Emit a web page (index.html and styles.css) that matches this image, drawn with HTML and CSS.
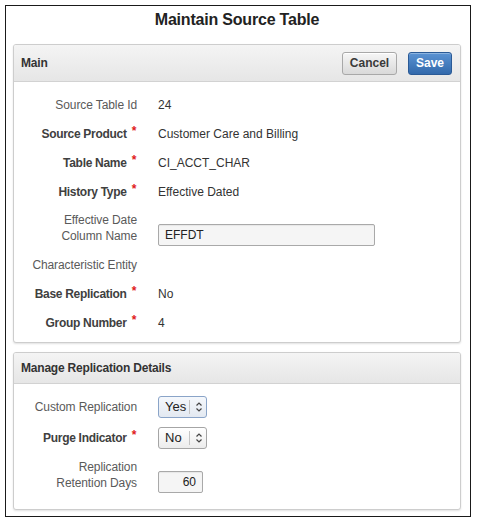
FILE: index.html
```html
<!DOCTYPE html>
<html>
<head>
<meta charset="utf-8">
<link rel="stylesheet" href="styles.css">
</head>
<body>
<div class="frame">
  <h1 class="title">Maintain Source Table</h1>

  <section class="panel">
    <header class="panel-head tall">
      <span class="panel-title">Main</span>
      <div class="actions">
        <button class="btn btn-cancel">Cancel</button>
        <button class="btn btn-save">Save</button>
      </div>
    </header>
    <div class="panel-body main-body">
      <div class="row"><span class="label">Source Table Id</span><span class="value">24</span></div>
      <div class="row"><span class="label req">Source Product <i>*</i></span><span class="value">Customer Care and Billing</span></div>
      <div class="row"><span class="label req">Table Name <i>*</i></span><span class="value">CI_ACCT_CHAR</span></div>
      <div class="row"><span class="label req">History Type <i>*</i></span><span class="value">Effective Dated</span></div>
      <div class="row row-multi">
        <span class="label two">Effective Date<br>Column Name</span>
        <span class="field field-wide">EFFDT</span>
      </div>
      <div class="row"><span class="label">Characteristic Entity</span><span class="value"></span></div>
      <div class="row"><span class="label req">Base Replication <i>*</i></span><span class="value">No</span></div>
      <div class="row"><span class="label req">Group Number <i>*</i></span><span class="value">4</span></div>
    </div>
  </section>

  <section class="panel panel-2">
    <header class="panel-head short">
      <span class="panel-title">Manage Replication Details</span>
    </header>
    <div class="panel-body repl-body">
      <div class="row row-sel">
        <span class="label">Custom Replication</span>
        <span class="select focused"><span class="sel-text">Yes</span><span class="sel-sep"></span><svg class="sel-arrow" viewBox="0 0 8 12" width="8" height="12"><path d="M1.5 4.5 L4 2 L6.5 4.5 M1.5 7.5 L4 10 L6.5 7.5" fill="none" stroke="#444" stroke-width="1.2"/></svg></span>
      </div>
      <div class="row row-sel">
        <span class="label req">Purge Indicator <i>*</i></span>
        <span class="select"><span class="sel-text">No</span><span class="sel-sep"></span><svg class="sel-arrow" viewBox="0 0 8 12" width="8" height="12"><path d="M1.5 4.5 L4 2 L6.5 4.5 M1.5 7.5 L4 10 L6.5 7.5" fill="none" stroke="#444" stroke-width="1.2"/></svg></span>
      </div>
      <div class="row row-multi row-ret">
        <span class="label two">Replication<br>Retention Days</span>
        <span class="field field-num">60</span>
      </div>
    </div>
  </section>
</div>
</body>
</html>
```

FILE: styles.css
```css
* { box-sizing: border-box; }
html, body { margin: 0; padding: 0; background: #fff; }
body {
  font-family: "Liberation Sans", Arial, sans-serif;
  font-size: 12px;
  color: #333;
}
.frame {
  margin: 5px 0 0 5px;
  width: 466px;
  height: 512px;
  border: 1px solid #1a1a1a;
  padding: 0 9px 0 7px;
}
.title {
  margin: 0;
  padding-top: 4px;
  height: 38px;
  line-height: 20px;
  font-size: 16px;
  letter-spacing: -0.2px;
  font-weight: bold;
  text-align: center;
  color: #222;
}
.panel {
  border: 1px solid #cdcdcd;
  border-radius: 3px;
  box-shadow: 0 1px 2px rgba(0,0,0,0.12);
  background: #fff;
}
.panel-2 { margin-top: 9px; }
.panel-head {
  display: flex;
  align-items: center;
  justify-content: space-between;
  padding: 0 8px 0 7px;
  background: linear-gradient(#f4f4f4, #e6e6e6);
  border-bottom: 1px solid #d2d2d2;
  border-radius: 2px 2px 0 0;
}
.panel-head.tall { height: 37px; }
.panel-head.short { height: 31px; }
.panel-title {
  font-weight: bold;
  color: #333;
  font-size: 12px;
  letter-spacing: -0.2px;
}
.actions { display: flex; gap: 11px; align-items: center; }
.btn {
  font-family: inherit;
  font-size: 12px;
  font-weight: bold;
  height: 23px;
  border-radius: 3px;
  padding: 0;
  cursor: pointer;
}
.btn-cancel {
  width: 55px;
  color: #3a3a3a;
  border: 1px solid #a8a8a8;
  background: linear-gradient(#f6f6f6, #d9d9d9);
  box-shadow: inset 0 1px 0 #fff;
}
.btn-save {
  width: 44px;
  color: #fff;
  border: 1px solid #2a5a96;
  background: linear-gradient(#5b93d3, #3269ab);
  box-shadow: inset 0 1px 0 rgba(255,255,255,0.3);
}
.panel-body { padding: 0; }
.main-body { padding: 8px 0 5px; }
.repl-body { padding: 7px 0 12px; }
.row {
  display: grid;
  grid-template-columns: 123px auto;
  column-gap: 21px;
  align-items: center;
  height: 29px;
}
.label {
  text-align: right;
  color: #5a5a5a;
  line-height: 16px;
  white-space: nowrap;
  letter-spacing: -0.1px;
}
.label.req {
  font-weight: bold;
  color: #404040;
  padding-right: 1px;
  letter-spacing: -0.3px;
}
.label.req i {
  font-style: normal;
  color: #e02020;
  font-size: 12px;
  position: relative;
  top: -3px;
  margin-left: 2px;
}
.value { color: #333; line-height: 16px; }
.row-multi {
  height: 44px;
  align-items: start;
  padding-top: 6px;
}
.row-multi .field { align-self: end; margin-bottom: 4px; }
.field {
  display: flex;
  align-items: center;
  height: 22px;
  border: 1px solid #a9a9a9;
  background: #f5f5f5;
  color: #222;
  border-radius: 2px;
  box-shadow: inset 0 1px 1px rgba(0,0,0,0.06);
}
.field-wide { width: 217px; padding-left: 6px; }
.field-num { width: 45px; justify-content: flex-end; padding-right: 6px; font-size: 12px; }
.row-sel { height: 31px; }
.select {
  display: inline-flex;
  align-items: center;
  width: 49px;
  height: 22px;
  border: 1px solid #a5a5a5;
  border-radius: 3px;
  background: linear-gradient(#ffffff, #ececec);
  font-size: 13px;
  color: #222;
  justify-self: start;
}
.select.focused {
  border-color: #8aa4c8;
  background: linear-gradient(#f5f8fc, #e3e9f1);
}
.sel-text { padding-left: 6px; width: 30px; }
.sel-sep { width: 1px; height: 14px; background: #c4c4c4; }
.sel-arrow { margin-left: 5px; }
.row-ret { height: 44px; padding-top: 6px; }
```
